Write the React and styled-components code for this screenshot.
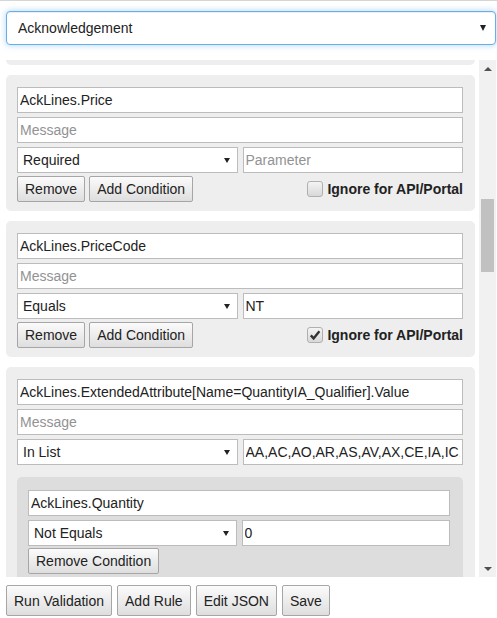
import React, { useLayoutEffect, useRef } from 'react';
import styled, { createGlobalStyle } from 'styled-components';

const GlobalStyle = createGlobalStyle`
  html, body { margin: 0; padding: 0; background: #fff; }
  body { font-family: "Liberation Sans", Arial, sans-serif; font-size: 14px; color: #222; }
  * { box-sizing: border-box; }
`;

const rules = [
  { field: 'AckLines.UnitOfMeasure', op: 'Required', param: '', ignore: false },
  { field: 'AckLines.Price', op: 'Required', param: '', ignore: false },
  { field: 'AckLines.PriceCode', op: 'Equals', param: 'NT', ignore: true },
  {
    field: 'AckLines.ExtendedAttribute[Name=QuantityIA_Qualifier].Value',
    op: 'In List',
    param: 'AA,AC,AO,AR,AS,AV,AX,CE,IA,IC,ID,IF,IP,IQ,IR,IS,IW',
    ignore: false,
    conditions: [{ field: 'AckLines.Quantity', op: 'Not Equals', param: '0' }],
  },
];

const operators = ['Required', 'Equals', 'Not Equals', 'In List', 'Not In List'];

const App = () => {
  const scrollRef = useRef(null);
  const targetRef = useRef(null);

  useLayoutEffect(() => {
    if (scrollRef.current && targetRef.current) {
      scrollRef.current.scrollTop = targetRef.current.offsetTop - 15;
    }
  }, []);

  return (
    <Page>
      <GlobalStyle />
      <DocSelect>
        <select defaultValue="Acknowledgement">
          <option>Acknowledgement</option>
          <option>Invoice</option>
          <option>Ship Notice</option>
        </select>
        <Caret $size={6} />
      </DocSelect>

      <Viewport>
        <ScrollArea ref={scrollRef}>
          {rules.map((rule, idx) => (
            <Card key={idx} ref={idx === 1 ? targetRef : null}>
              <Field defaultValue={rule.field} />
              <Field placeholder="Message" />
              <Pair>
                <SelectBox>
                  <select defaultValue={rule.op}>
                    {operators.map((op) => <option key={op}>{op}</option>)}
                  </select>
                  <Caret $size={5} />
                </SelectBox>
                <Field placeholder="Parameter" defaultValue={rule.param} />
              </Pair>

              {rule.conditions && rule.conditions.map((cond, cIdx) => (
                <Condition key={cIdx}>
                  <Field defaultValue={cond.field} />
                  <Pair>
                    <SelectBox>
                      <select defaultValue={cond.op}>
                        {operators.map((op) => <option key={op}>{op}</option>)}
                      </select>
                      <Caret $size={5} />
                    </SelectBox>
                    <Field defaultValue={cond.param} />
                  </Pair>
                  <ButtonRow $lift={2}>
                    <Button>Remove Condition</Button>
                  </ButtonRow>
                </Condition>
              ))}

              <ButtonRow $lift={1}>
                <Button>Remove</Button>
                <Button>Add Condition</Button>
                <Ignore>
                  <CheckBox>
                    {rule.ignore && (
                      <svg width="12" height="12" viewBox="0 0 12 12">
                        <path d="M1.8 6.4 L4.6 9.4 L10.4 2.2" fill="none" stroke="#333" strokeWidth="2.4" />
                      </svg>
                    )}
                  </CheckBox>
                  Ignore for API/Portal
                </Ignore>
              </ButtonRow>
            </Card>
          ))}
        </ScrollArea>

        <ScrollBar>
          <ArrowCell><Arrow $up /></ArrowCell>
          <Track><Thumb /></Track>
          <ArrowCell><Arrow /></ArrowCell>
        </ScrollBar>
      </Viewport>

      <Footer>
        <BigButton>Run Validation</BigButton>
        <BigButton>Add Rule</BigButton>
        <BigButton>Edit JSON</BigButton>
        <BigButton>Save</BigButton>
      </Footer>
    </Page>
  );
};

const Page = styled.div`
  width: 497px;
  height: 618px;
  border-top: 1px solid #d6d6d6;
  padding: 10px 1px 0 6px;
  display: flex;
  flex-direction: column;
`;

const DocSelect = styled.label`
  display: flex;
  align-items: center;
  height: 34px;
  border: 1px solid #66afe9;
  border-radius: 4px;
  background: #fff;
  box-shadow: inset 0 1px 1px rgba(0, 0, 0, 0.075), 0 0 6px rgba(102, 175, 233, 0.55);
  padding-right: 9px;

  select {
    flex: 1;
    appearance: none;
    border: none;
    outline: none;
    background: transparent;
    height: 100%;
    padding: 0 0 0 11px;
    font: 14px "Liberation Sans", Arial, sans-serif;
    color: #222;
  }
`;

const Caret = styled.span`
  width: 0;
  height: 0;
  border-left: ${({ $size }) => $size / 2 + 0.5}px solid transparent;
  border-right: ${({ $size }) => $size / 2 + 0.5}px solid transparent;
  border-top: ${({ $size }) => $size}px solid #222;
`;

const Viewport = styled.div`
  display: flex;
  gap: 4px;
  height: 517px;
  margin-top: 15px;
`;

const ScrollArea = styled.div`
  position: relative;
  flex: 1;
  overflow-y: scroll;
  scrollbar-width: none;
  &::-webkit-scrollbar { display: none; }
`;

const Card = styled.div`
  background: #eeeeee;
  border-radius: 5px;
  padding: 12px 12px 9px 11px;
  margin-bottom: 10px;
  display: flex;
  flex-direction: column;
  gap: 4px;
`;

const Condition = styled.div`
  background: #dddddd;
  border-radius: 5px;
  margin-top: 8px;
  padding: 13px 13px 8px 11px;
  display: flex;
  flex-direction: column;
  gap: 4px;
`;

const Field = styled.input`
  width: 100%;
  height: 26px;
  border: 1px solid #bcbcbc;
  background: #fff;
  padding: 0 2px;
  font: 14px "Liberation Sans", Arial, sans-serif;
  color: #222;
  outline: none;

  &::placeholder { color: #929292; }
`;

const Pair = styled.div`
  display: grid;
  grid-template-columns: 1fr 1fr;
  gap: 5px;
`;

const SelectBox = styled.label`
  display: flex;
  align-items: center;
  height: 26px;
  border: 1px solid #bcbcbc;
  background: #fff;
  padding-right: 7px;

  select {
    flex: 1;
    min-width: 0;
    appearance: none;
    border: none;
    outline: none;
    background: transparent;
    height: 100%;
    padding: 0 0 0 5px;
    font: 14px "Liberation Sans", Arial, sans-serif;
    color: #222;
  }
`;

const ButtonRow = styled.div`
  display: flex;
  align-items: center;
  gap: 4px;
  margin-top: ${({ $lift }) => -($lift || 0)}px;
`;

const Button = styled.button`
  height: 26px;
  padding: 0 7px;
  border: 1px solid #a6a6a6;
  border-radius: 2px;
  background: linear-gradient(#fbfbfb, #dedede);
  font: 14px "Liberation Sans", Arial, sans-serif;
  color: #222;
  white-space: nowrap;
`;

const Ignore = styled.label`
  margin-left: auto;
  display: flex;
  align-items: center;
  gap: 4px;
  font-weight: bold;
  color: #222;
`;

const CheckBox = styled.span`
  width: 16px;
  height: 16px;
  border: 1px solid #b0b0b0;
  border-radius: 3px;
  background: linear-gradient(#f4f4f4, #d8d8d8);
  display: flex;
  align-items: center;
  justify-content: center;
`;

const ScrollBar = styled.div`
  width: 17px;
  background: #f1f1f1;
  display: flex;
  flex-direction: column;
`;

const ArrowCell = styled.div`
  height: 17px;
  display: flex;
  align-items: center;
  justify-content: center;
`;

const Arrow = styled.span`
  width: 0;
  height: 0;
  border-left: 4px solid transparent;
  border-right: 4px solid transparent;
  ${({ $up }) => ($up ? 'border-bottom: 4px solid #505050;' : 'border-top: 4px solid #505050;')}
`;

const Track = styled.div`
  flex: 1;
  padding: 122px 2px 0;
`;

const Thumb = styled.div`
  height: 73px;
  background: #c1c1c1;
`;

const Footer = styled.div`
  display: flex;
  gap: 5px;
  margin-top: 8px;
`;

const BigButton = styled(Button)`
  height: 31px;
  padding: 0 7px;
`;

export default App;
